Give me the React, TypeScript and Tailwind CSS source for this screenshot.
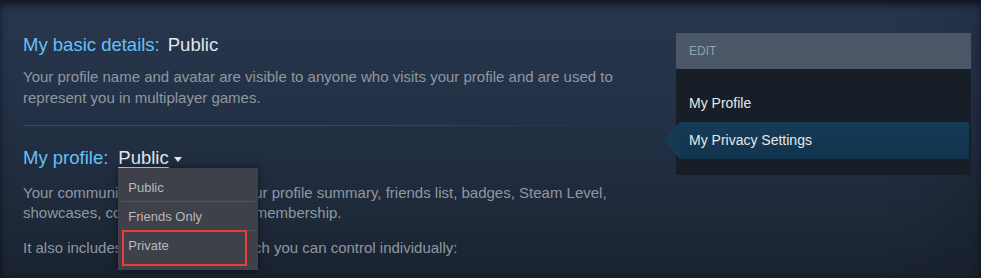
const blue = 'text-[#66c0f4]';

function Dropdown() {
  const items = ['Public', 'Friends Only', 'Private'];
  return (
    <div className="absolute left-0 top-[21px] z-10 w-[140px] bg-[#3e4149] px-[3px] pb-[10px] pt-[5px] shadow-[0_0_8px_rgba(0,0,0,0.5)]">
      {items.map((item, i) => (
        <div
          key={item}
          className={`h-[29px] pl-[7px] text-[13px] leading-[29px] text-[#b7b9bd] ${
            i < items.length - 1 ? 'border-b border-[#51555d]' : ''
          }`}
        >
          {item}
        </div>
      ))}
      {/* highlight box */}
      <div className="absolute left-[4px] top-[62px] h-[36px] w-[125px] border-2 border-[#ed3b3b]" />
    </div>
  );
}

function Sidebar() {
  return (
    <div className="mr-[10px] mt-[33px] w-[295px] shrink-0 font-['Liberation_Sans',Arial,sans-serif]">
      <div className="h-[36px] bg-[#4b5767] pl-[13px] text-[12px] uppercase leading-[36px] text-[#8aa4bd]">Edit</div>
      <div className="bg-[#171e28] pb-[16px] pt-[25px]">
        <div className="pl-[13px] text-[14px] leading-[18px] text-[#e6e8ea]">My Profile</div>
        <div className="relative ml-[4px] mr-[2px] mt-[10px] h-[37px] rounded-r-[2px] bg-gradient-to-b from-[#173c57] to-[#11344d] pl-[9px] text-[14px] leading-[37px] text-[#e6e8ea]">
          <svg className="absolute left-[-17px] top-0" width="17" height="37" viewBox="0 0 17 37">
            <path d="M17 0 L0 18.5 L17 37 Z" fill="#163a54" />
          </svg>
          My Privacy Settings
        </div>
      </div>
    </div>
  );
}

export default function App() {
  return (
    <div className="relative h-[278px] w-[981px] overflow-hidden bg-gradient-to-b from-[#293850] via-[#222f43] to-[#1b2432] font-['Liberation_Sans',Arial,sans-serif]">
      <div className="pointer-events-none absolute inset-0 shadow-[inset_0_5px_6px_rgba(0,0,0,0.55),inset_-40px_0_60px_rgba(0,0,0,0.12)]" />
      <div className="relative flex">
        <div className="w-[640px] shrink-0 pl-[23px] pt-[34px]">
          <div className="text-[18.5px] leading-[22px]">
            <span className={blue}>My basic details:</span>
            <span className="ml-[8px] text-[#e2e6ea]">Public</span>
          </div>
          <p className="mt-[10px] w-[610px] text-[15px] leading-[21px] text-[#8f98a0]">
            Your profile name and avatar are visible to anyone who visits your profile and are used to represent you in
            multiplayer games.
          </p>
          <div className="mt-[17px] h-px w-[605px] bg-gradient-to-r from-[#3c4b5e] via-[#3c4b5e] to-transparent" />
          <div className="mt-[21px] flex items-center text-[18.5px] leading-[22px]">
            <span className={blue}>My profile:</span>
            <span className="relative ml-[10px]">
              <span className="text-[#e2e6ea] underline decoration-1 underline-offset-[3px]">Public</span>
              <Dropdown />
            </span>
            <svg className="ml-[5px] mt-[3px]" width="8" height="5" viewBox="0 0 8 5">
              <path d="M0 0 H8 L4 5 Z" fill="#e2e6ea" />
            </svg>
          </div>
          <p className="mt-[14px] w-[610px] text-[15px] leading-[20px] text-[#8f98a0]">
            Your community profile includes your profile summary, friends list, badges, Steam Level, showcases, comments,
            and group membership.
          </p>
          <p className="mt-[15px] text-[15px] leading-[20px] text-[#8f98a0]">
            It also includes a few elements which you can control individually:
          </p>
        </div>
        <div className="flex-1" />
        <Sidebar />
      </div>
    </div>
  );
}
